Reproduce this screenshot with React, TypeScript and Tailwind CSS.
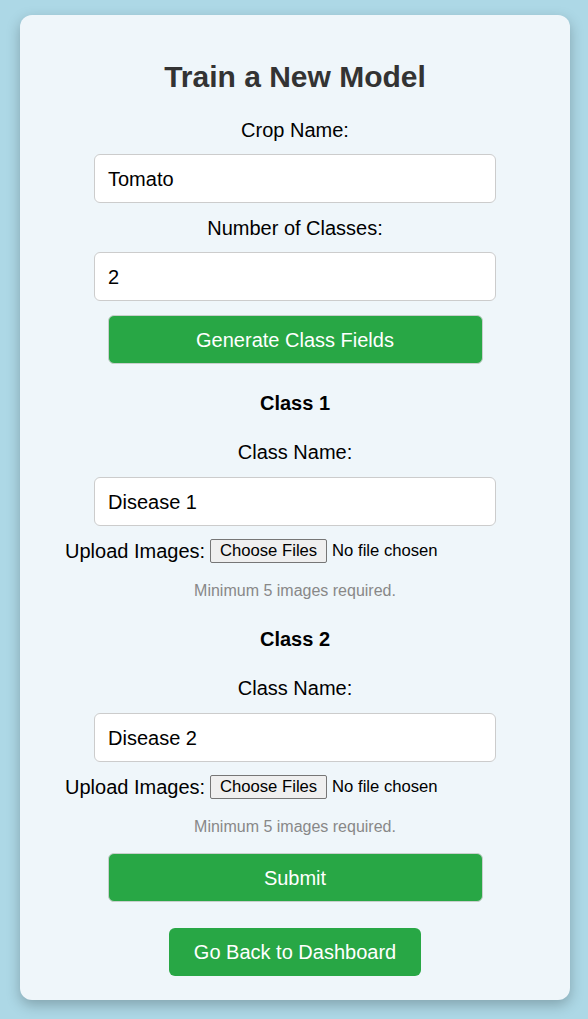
import React from "react";

function FileRow() {
  return (
    <div className="mt-[13px] h-[24px] w-full flex items-center pl-[45px] text-[20px] text-black">
      <span>Upload Images:</span>
      <span className="ml-[5px] h-[24px] w-[117px] flex items-center justify-center border border-[#767676] bg-[#efefef] rounded-[2px] text-[16.67px] leading-none">
        Choose Files
      </span>
      <span className="ml-[5px] text-[16.67px] leading-none">No file chosen</span>
    </div>
  );
}

function Field({ value, mt }: { value: string; mt: string }) {
  return (
    <div
      className={`${mt} w-[402px] h-[49px] bg-white border border-[#cccccc] rounded-[6px] flex items-center pl-[13px] text-[20px] text-black`}
    >
      {value}
    </div>
  );
}

function ClassBlock({ n, mtTop }: { n: number; mtTop: string }) {
  return (
    <>
      <div className={`${mtTop} h-[24px] leading-[24px] text-[20px] font-bold text-black`}>Class {n}</div>
      <div className="mt-[25px] h-[24px] leading-[24px] text-[20px] text-black">Class Name:</div>
      <Field value={`Disease ${n}`} mt="mt-[13px]" />
      <FileRow />
      <div className="mt-[19px] h-[18px] leading-[18px] text-[16px] text-[#888888]">Minimum 5 images required.</div>
    </>
  );
}

export default function App() {
  return (
    <div
      className="min-h-[1019px] w-full bg-[#add8e6] pt-[15px] pb-[19px]"
      style={{ fontFamily: '"Liberation Sans", Arial, sans-serif' }}
    >
      <div className="mx-[20px] w-[550px] bg-[#eff6fa] rounded-[12px] shadow-[0_5px_14px_rgba(0,0,0,0.25)] pt-[44px] pb-[24px] flex flex-col items-center">
        <h2 className="h-[36px] leading-[36px] text-[30px] font-bold text-[#333333]">Train a New Model</h2>
        <div className="mt-[23px] h-[24px] leading-[24px] text-[20px] text-black">Crop Name:</div>
        <Field value="Tomato" mt="mt-[12px]" />
        <div className="mt-[13px] h-[24px] leading-[24px] text-[20px] text-black">Number of Classes:</div>
        <Field value="2" mt="mt-[12px]" />
        <div className="mt-[14px] w-[375px] h-[49px] bg-[#28a745] border border-[#c8d0cc] rounded-[6px] flex items-center justify-center text-[20px] text-white">
          Generate Class Fields
        </div>
        <ClassBlock n={1} mtTop="mt-[27px]" />
        <ClassBlock n={2} mtTop="mt-[27px]" />
        <div className="mt-[17px] w-[375px] h-[49px] bg-[#28a745] border border-[#c8d0cc] rounded-[6px] flex items-center justify-center text-[20px] text-white">
          Submit
        </div>
        <div className="mt-[26px] w-[252px] h-[48px] bg-[#28a745] rounded-[6px] flex items-center justify-center text-[20px] text-white">
          Go Back to Dashboard
        </div>
      </div>
    </div>
  );
}
